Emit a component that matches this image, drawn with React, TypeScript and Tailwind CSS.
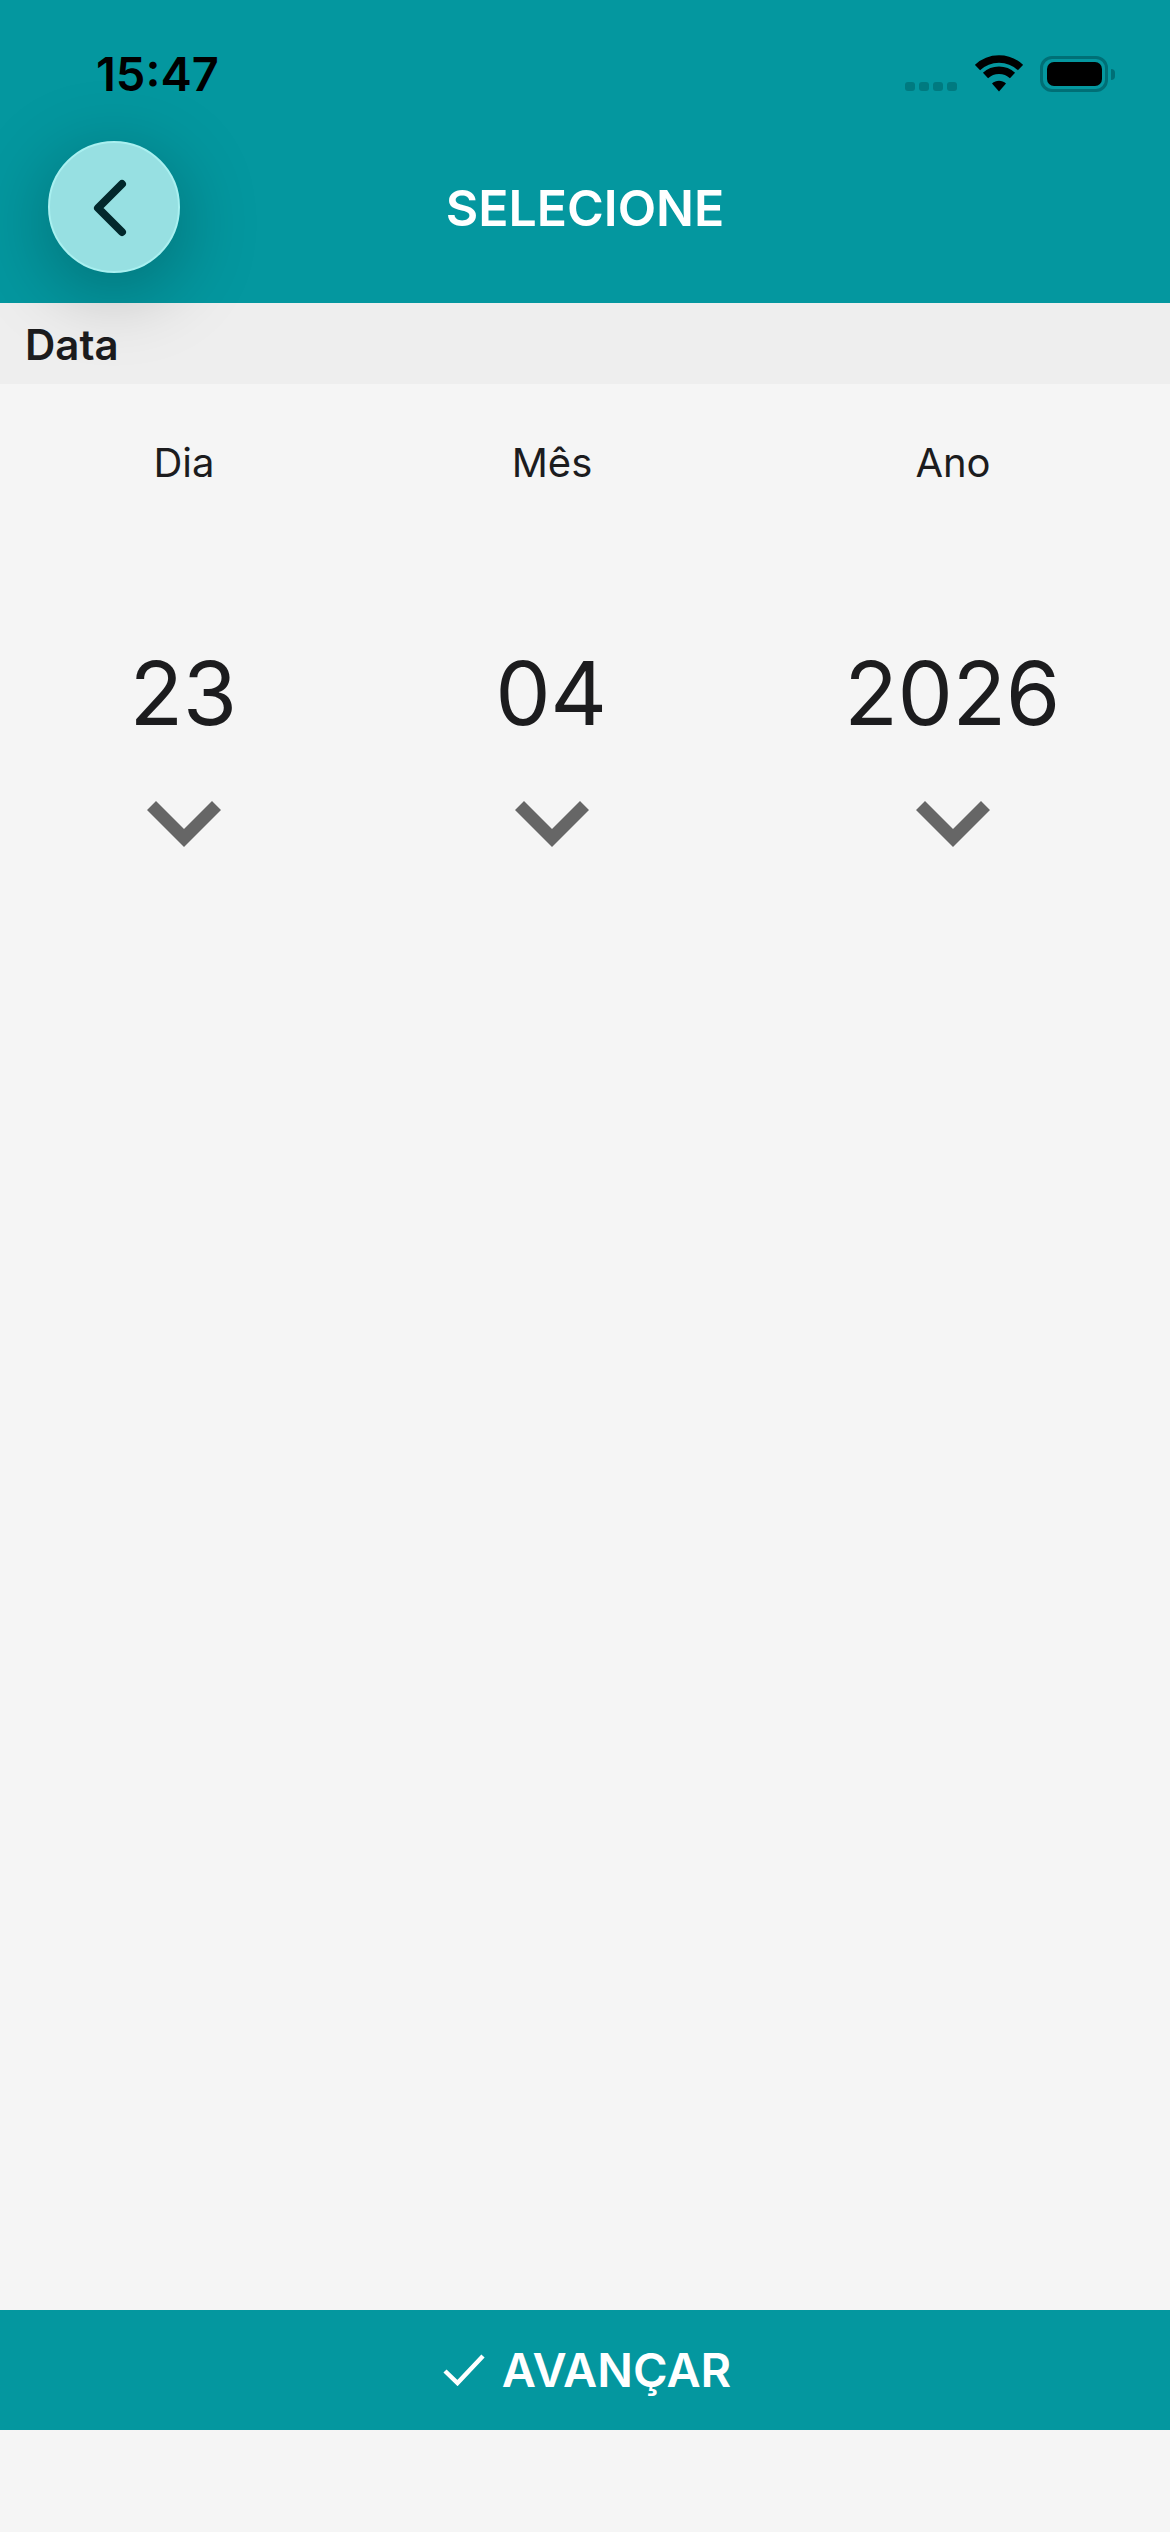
import React from 'react';

const columns = [
  { label: 'Dia', value: '23' },
  { label: 'Mês', value: '04' },
  { label: 'Ano', value: '2026' },
];

const WifiIcon = () => (
  <svg width="48" height="37" viewBox="0 0 48 37" fill="none">
    <path d="M2.5 12.5C14.5 1 33.5 1 45.5 12.5" stroke="#000" strokeWidth="7.5" />
    <path d="M10.5 20.5C18 13.5 30 13.5 37.5 20.5" stroke="#000" strokeWidth="7.5" />
    <path d="M17 28.5C21 24.8 27 24.8 31 28.5L24 36.5Z" fill="#000" />
  </svg>
);

const Chevron = () => (
  <svg width="74" height="46" viewBox="0 0 74 46" fill="#666666">
    <polygon points="0,9 9,0 37,28 65,0 74,9 37,46" />
  </svg>
);

const App: React.FC = () => {
  return (
    <div className="relative flex h-[2532px] w-full flex-col bg-[#f5f5f5] font-['Inter',sans-serif] text-[#1c1c1e]">
      {/* Header */}
      <div className="flex h-[303px] flex-col bg-[#04979f]">
        <div className="flex h-[178px] items-start justify-between pl-[96px] pr-[55px]">
          <span className="mt-[47px] text-[47px] font-semibold leading-[54px] text-black">15:47</span>
          <div className="mt-[55px] flex items-start">
            <div className="mt-[27px] mr-[18px] flex gap-[4px]">
              <div className="h-[9px] w-[10px] rounded-[3px] bg-[#007a80]" />
              <div className="h-[9px] w-[10px] rounded-[3px] bg-[#007a80]" />
              <div className="h-[9px] w-[10px] rounded-[3px] bg-[#007a80]" />
              <div className="h-[9px] w-[10px] rounded-[3px] bg-[#007a80]" />
            </div>
            <WifiIcon />
            <div className="mt-[1px] ml-[17px] flex h-[36px] w-[68px] items-center justify-center rounded-[12px] border-[3px] border-[#006f76]">
              <div className="h-[24px] w-[55px] rounded-[7px] bg-black" />
            </div>
            <div className="mt-[14px] ml-[3px] h-[11px] w-[4px] rounded-r-full bg-[#006f76]" />
          </div>
        </div>
        <h1 className="text-center text-[50px] font-semibold leading-[60px] text-white">SELECIONE</h1>
      </div>

      {/* Back button */}
      <button className="absolute left-[48px] top-[141px] z-10 flex h-[132px] w-[132px] items-center justify-center rounded-full border-2 border-[#a9f0f0] bg-[#97e0e2] shadow-[0_16px_80px_rgba(0,0,0,0.28)]">
        <svg width="132" height="132" viewBox="0 0 132 132" fill="none" className="shrink-0">
          <path d="M74 43L50 67L74 91" stroke="#02282c" strokeWidth="8" strokeLinecap="round" strokeLinejoin="round" />
        </svg>
      </button>

      {/* Section title */}
      <div className="flex h-[81px] items-center bg-[#eeeeee] pl-[25px] pt-[2px]">
        <span className="text-[42px] font-semibold leading-[48px]">Data</span>
      </div>

      {/* Date picker */}
      <div className="grid grid-cols-[368px_368px_1fr] pt-[55px]">
        {columns.map((col) => (
          <div key={col.label} className="flex flex-col items-center">
            <span className="text-[40px] leading-[48px]">{col.label}</span>
            <span className="mt-[153px] pr-[2px] text-[88px] font-normal leading-[106px] tracking-[-0.5px]">{col.value}</span>
            <div className="mt-[55px]">
              <Chevron />
            </div>
          </div>
        ))}
      </div>

      <div className="flex-1" />

      {/* Footer action */}
      <button className="mb-[102px] flex h-[120px] items-center justify-center bg-[#04979f] pl-[4px] text-white">
        <svg width="42" height="32" viewBox="0 0 42 32" fill="none" className="mr-[17px]">
          <path d="M2 17L14.5 29L40 2" stroke="#fff" strokeWidth="4.5" />
        </svg>
        <span className="text-[47px] font-semibold leading-[56px]">AVANÇAR</span>
      </button>
    </div>
  );
};

export default App;
